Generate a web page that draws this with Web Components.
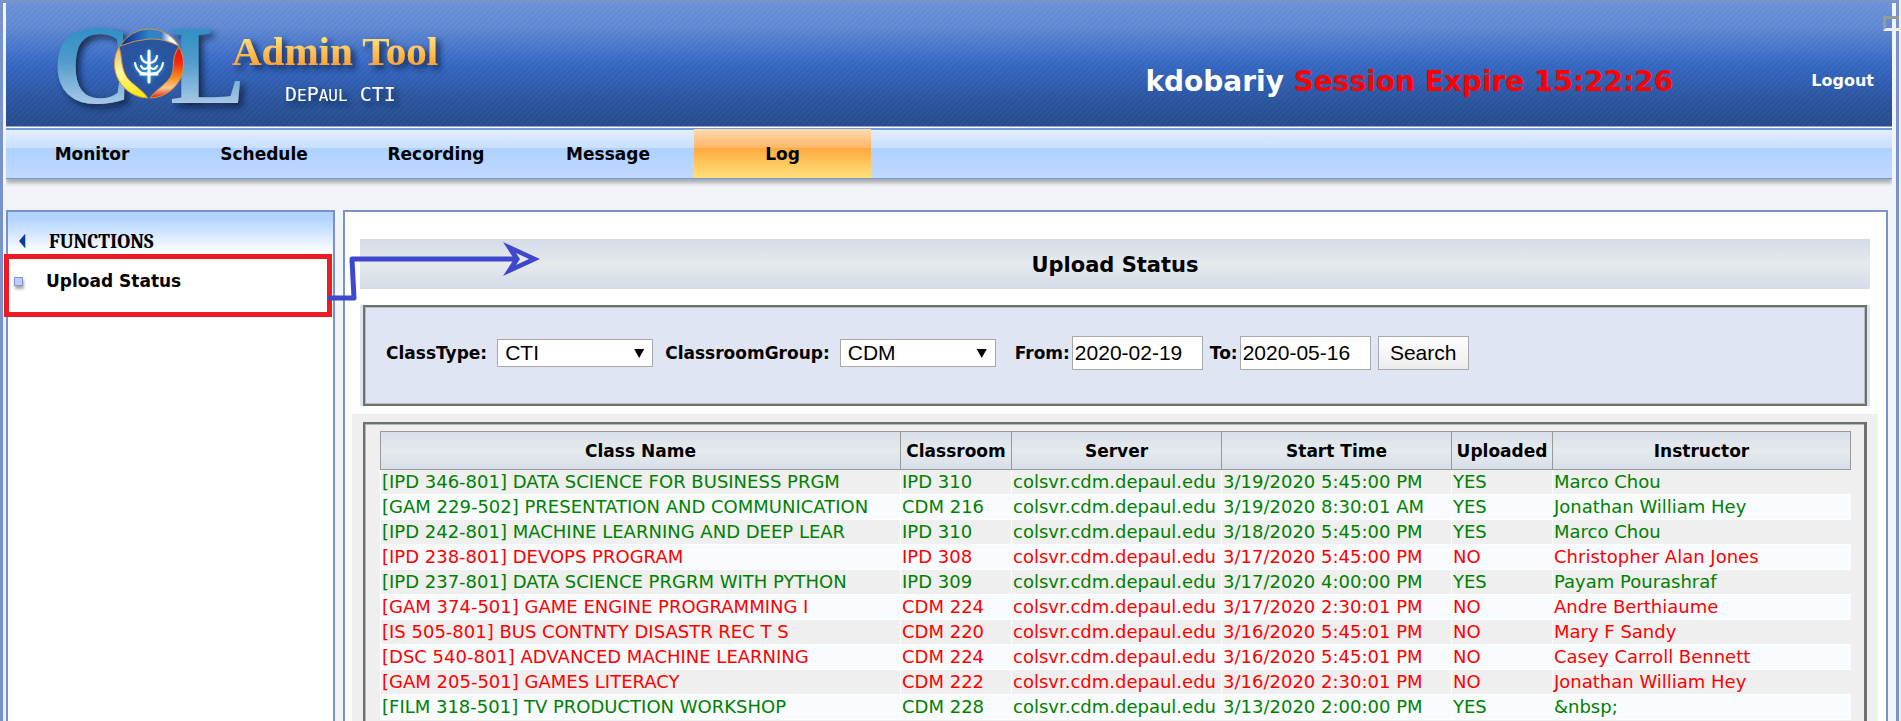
<!DOCTYPE html>
<html lang="en">
<head>
<meta charset="utf-8">
<title>COL Admin Tool - Upload Status</title>
<style>
  body { margin: 0; background: #f0f0f0; font-family: Verdana, "DejaVu Sans", sans-serif; font-size: 17px; color: #000; }
</style>
</head>
<body>
<col-app>
  <col-header slot="header" user="kdobariy" expires="15:22:26"></col-header>
  <col-nav slot="nav" current="Log"></col-nav>
  <col-sidebar slot="sidebar">Upload Status</col-sidebar>
  <col-title>Upload Status</col-title>
  <col-filter></col-filter>
  <col-log-table></col-log-table>
</col-app>

<script>
class BaseElement extends HTMLElement {
  connectedCallback() {
    if (this.shadowRoot) return;
    this.attachShadow({ mode: 'open' }).innerHTML = this.render();
  }
}

customElements.define('col-app', class extends BaseElement {
  render() {
    return `
    <style>
      :host { display: flex; flex-direction: column; box-sizing: border-box; min-height: 100vh; position: relative;
        margin-right: 2px; border: solid #7893cb; border-width: 3px 3px 0; background: #f3f4fa; }
      .top { padding: 0 4px 0 3px; flex: none; }
      .work { position: relative; display: flex; flex: 1 0 auto; margin-top: 31px; padding: 0 8px 0 3px; gap: 8px; }
      .side { flex: none; width: 329px; display: flex; }
      main { flex: 1; min-width: 0; display: flex; flex-direction: column; border: 2px solid #7893cb; border-bottom: 0; background: #fff; padding: 27px 8px 0 7px; }
      .callout { position: absolute; left: 0; top: 40px; overflow: visible; pointer-events: none; }
      .frame { position: absolute; right: -3px; top: 13px; width: 13px; height: 9px; border: 3px solid #999; border-bottom-color: #eee; border-right: 0; }
    </style>
    <div class="top"><slot name="header"></slot><slot name="nav"></slot></div>
    <div class="work">
      <div class="side"><slot name="sidebar"></slot></div>
      <main><slot></slot></main>
      <svg class="callout" width="540" height="70" viewBox="0 0 540 70" aria-hidden="true">
        <path fill="#ed1c24" fill-rule="evenodd" d="M1 4H329V67H1ZM6 9V62H324V9Z"/>
        <path fill="none" stroke="#3f48cc" stroke-width="5" stroke-linecap="round" stroke-linejoin="round" d="M327 48H351L349 9H514"/>
        <path fill="#3f48cc" d="M500 -8L537 9L500 26L511 9Z"/>
        <path fill="#e5e9ee" d="M513 3L517 9L513 15L526 9Z"/>
      </svg>
    </div>
    <div class="frame"></div>`;
  }
});

customElements.define('col-logo', class extends BaseElement {
  render() {
    return `
    <style>
      :host { display: block; }
      svg { display: block; overflow: visible; }
      .big { font: bold 112px "Liberation Serif", serif; }
      .tool { font: bold 41px "Liberation Serif", serif; }
      .org { font: 20px "DejaVu Sans Mono", monospace; }
      .sm { font-size: 16px; }
    </style>
    <svg width="460" height="123" viewBox="6 3 460 123" role="img" aria-label="COL Admin Tool, DePaul CTI">
      <defs>
        <linearGradient id="steel" gradientUnits="userSpaceOnUse" x1="0" y1="25" x2="0" y2="104">
          <stop offset="0" stop-color="#2c8fc4"/><stop offset=".45" stop-color="#4f9bcb"/><stop offset="1" stop-color="#a9c8e6"/></linearGradient>
        <linearGradient id="gold" gradientUnits="userSpaceOnUse" x1="0" y1="38" x2="0" y2="66">
          <stop offset="0" stop-color="#ffdf7a"/><stop offset="1" stop-color="#ff9f2e"/></linearGradient>
        <linearGradient id="blue" x1="0" x2="1"><stop offset="0" stop-color="#10208c"/><stop offset=".5" stop-color="#2a86cc"/><stop offset=".7" stop-color="#3a7cc8"/><stop offset=".85" stop-color="#fff"/></linearGradient>
        <linearGradient id="yellow" x1="0" y1="0" x2="0" y2="1"><stop offset="0" stop-color="#e0b878"/><stop offset=".5" stop-color="#fff6a0"/><stop offset="1" stop-color="#ffe800"/></linearGradient>
        <linearGradient id="red" x1="0" y1="0" x2="0" y2="1"><stop offset="0" stop-color="#e80c0c"/><stop offset=".3" stop-color="#f02a10"/><stop offset=".6" stop-color="#ff8a1c"/><stop offset=".8" stop-color="#ffc890"/><stop offset="1" stop-color="#e02010"/></linearGradient>
        <filter id="shadow" x="-20%" y="-20%" width="150%" height="150%"><feDropShadow dx="4" dy="4" stdDeviation="3" flood-color="#0c1c40" flood-opacity=".85"/></filter>
        <filter id="glow" x="-50%" y="-50%" width="200%" height="200%"><feDropShadow dx="0" dy="0" stdDeviation="2" flood-color="#22b4ff"/></filter>
      </defs>
      <g filter="url(#shadow)" fill="url(#steel)">
        <text class="big" x="52" y="103">C</text>
        <text class="big" x="170" y="103">L</text>
      </g>
      <circle cx="149" cy="64" r="34" fill="#2a549f"/>
      <g stroke="#c79a3c" stroke-width="1">
        <path fill="url(#blue)" d="M120 46A34 34 0 0 1 179 46Q163 38 149 39T120 46Z"/>
        <path fill="url(#yellow)" d="M119 47A34 34 0 0 0 148 98C140 87 129 83 125 74C121 65 122 56 119 47Z"/>
        <path fill="url(#red)" d="M179 47A34 34 0 0 1 150 98C157 88 168 84 172 74C175 65 171 58 179 47Z"/>
      </g>
      <g filter="url(#glow)" fill="none" stroke="#fff" stroke-width="3" stroke-linecap="round">
        <path d="M149 51V82M141 74H157"/>
        <path stroke-width="2" d="M135 63C137 75 146 74 149 74C152 74 161 75 163 63M141 56C142 63 147 63 149 63C151 63 156 63 157 56M141 66C143 70 146 70 149 66C152 70 155 70 157 66"/>
      </g>
      <g filter="url(#shadow)">
        <text class="tool" x="232" y="65" fill="url(#gold)">Admin Tool</text>
        <text class="org" x="285" y="101" fill="#fff">D<tspan class="sm">E</tspan>P<tspan class="sm">AUL</tspan> CTI</text>
      </g>
    </svg>`;
  }
});

customElements.define('col-header', class extends BaseElement {
  render() {
    return `
    <style>
      :host { display: flex; align-items: center; height: 123px; border-bottom: 1px solid #8fa6d4; box-shadow: 0 1px #fff; color: #fff; font-weight: bold;
        background: repeating-linear-gradient(135deg, rgba(255,255,255,.02) 0 2px, rgba(0,0,0,.02) 2px 4px),
          linear-gradient(#6b93d9 0, #608ad3 20%, #3a6cc8 46%, #3465bf 54%, #2b559e 80%, #284c8e 100%); }
      .status { margin: 34px 0 0 auto; font-size: 28px; line-height: 34px; white-space: nowrap; }
      .expire { color: #f00; }
      a { margin: 33px 18px 0 138px; font-size: 16px; line-height: 34px; color: #fff; text-decoration: none; }
    </style>
    <col-logo></col-logo>
    <div class="status">${this.getAttribute('user')} <span class="expire">Session Expire ${this.getAttribute('expires')}</span></div>
    <a href="#logout">Logout</a>`;
  }
});

customElements.define('col-nav', class extends BaseElement {
  render() {
    const current = this.getAttribute('current');
    const links = ['Monitor', 'Schedule', 'Recording', 'Message', 'Log'].map(t =>
      `<a href="#${t.toLowerCase()}"${t === current ? ' class="on" aria-current="page"' : ''}>${t}</a>`).join('');
    return `
    <style>
      :host { display: block; margin-top: 1px; }
      nav { display: flex; border: solid #6f9bda; border-width: 2px 0 1px; height: 48px; box-shadow: 0 4px 4px #aaa;
        background: linear-gradient(#e2eeff 0, #c8dfff 37%, #aed1ff 38%, #c0daff 100%); clip-path: inset(0 0 -8px 0); }
      a { width: 172px; text-align: center; font-weight: bold; line-height: 48px; color: #000; text-decoration: none; }
      .on { width: 177px; background: linear-gradient(#ffd8ac 0, #ffb668 37%, #ffaa3e 38%, #ffe07c 100%); box-shadow: 0 -1px #ffd8ac; }
    </style>
    <nav>${links}</nav>`;
  }
});

customElements.define('col-sidebar', class extends BaseElement {
  render() {
    return `
    <style>
      :host { flex: 1; display: block; border: 2px solid #7893cb; border-bottom: 0; background: #fff; }
      h2 { display: flex; align-items: center; margin: 0; height: 43px; padding: 15px 0 0 11px; box-sizing: border-box; gap: 23px;
        font: bold 20px Cambria, "Liberation Serif", serif; background: linear-gradient(#b3d4ff 0, #b3d4ff 15%, #fff 95%); }
      a { display: flex; align-items: center; height: 52px; padding-left: 6px; gap: 22px; font-weight: bold; color: #000; text-decoration: none; }
      i { width: 7px; height: 7px; margin-right: 1px; border: 1px solid #8094d8; background: #c6cbf4; box-shadow: 1px 3px 3px #aaa; }
    </style>
    <h2><svg width="7" height="14" viewBox="0 0 7 14" aria-hidden="true"><path fill="#0a3a9c" d="M0 7L6 0V14Z"/><path fill="#bbb" d="M6 0H7V14H6Z"/></svg>FUNCTIONS</h2>
    <a href="#upload-status"><i></i><slot></slot></a>`;
  }
});

customElements.define('col-title', class extends BaseElement {
  render() {
    return `
    <style>
      :host { display: block; margin: 0 8px 16px; background: linear-gradient(#d5dbe8, #e5eaec 50%, #d5dbe8); }
      h1 { margin: 0; padding-top: 2px; font-size: 21px; line-height: 48px; text-align: center; }
    </style>
    <h1><slot></slot></h1>`;
  }
});

customElements.define('col-filter', class extends BaseElement {
  render() {
    return `
    <style>
      :host { display: block; margin: 0 8px 8px; padding: 0 3px; background: #dfe5f3; }
      form { display: flex; align-items: center; box-sizing: border-box; height: 101px; padding: 0 21px 4px;
        border: solid #6c706e; outline: 1px solid #b4bab8; outline-offset: -3px; border-width: 2px 3px 3px 2px; }
      label { font-weight: bold; white-space: nowrap; }
      select, input, button { box-sizing: border-box; margin: 0; border: 1px solid #a9a9a9; background: #fff; color: #000;
        font: 21px Arial, "Liberation Sans", sans-serif; }
      .pick { position: relative; margin: 0 12px 0 10px; }
      .pick::after { content: ""; position: absolute; right: 9px; top: 10px; width: 10px; height: 9px; background: #000; clip-path: polygon(0 0, 100% 0, 50% 100%); pointer-events: none; }
      select { display: block; width: 156px; height: 28px; padding: 0 0 0 7px; line-height: 24px; border-radius: 0; appearance: none; }
      input { width: 131px; height: 34px; padding: 0 2px; margin: 0 7px 0 2px; }
      button { width: 91px; height: 34px; padding: 0; background: linear-gradient(#fff, #ececec); }
      .dates { margin-left: 7px; }
    </style>
    <form>
      <label for="type">ClassType:</label>
      <span class="pick"><select id="type"><option>CTI</option></select></span>
      <label for="group">ClassroomGroup:</label>
      <span class="pick"><select id="group"><option>CDM</option></select></span>
      <label class="dates" for="from">From:</label><input id="from" value="2020-02-19">
      <label for="to">To:</label><input id="to" value="2020-05-16">
      <button type="button">Search</button>
    </form>`;
  }
});

customElements.define('col-log-table', class extends BaseElement {
  render() {
    const head = ['Class Name', 'Classroom', 'Server', 'Start Time', 'Uploaded', 'Instructor'];
    const server = 'colsvr.cdm.depaul.edu';
    const rows = [
      ['[IPD 346-801] DATA SCIENCE FOR BUSINESS PRGM', 'IPD 310', '3/19/2020 5:45:00 PM', 'YES', 'Marco Chou'],
      ['[GAM 229-502] PRESENTATION AND COMMUNICATION', 'CDM 216', '3/19/2020 8:30:01 AM', 'YES', 'Jonathan William Hey'],
      ['[IPD 242-801] MACHINE LEARNING AND DEEP LEAR', 'IPD 310', '3/18/2020 5:45:00 PM', 'YES', 'Marco Chou'],
      ['[IPD 238-801] DEVOPS PROGRAM', 'IPD 308', '3/17/2020 5:45:00 PM', 'NO', 'Christopher Alan Jones'],
      ['[IPD 237-801] DATA SCIENCE PRGRM WITH PYTHON', 'IPD 309', '3/17/2020 4:00:00 PM', 'YES', 'Payam Pourashraf'],
      ['[GAM 374-501] GAME ENGINE PROGRAMMING I', 'CDM 224', '3/17/2020 2:30:01 PM', 'NO', 'Andre Berthiaume'],
      ['[IS 505-801] BUS CONTNTY DISASTR REC T S', 'CDM 220', '3/16/2020 5:45:01 PM', 'NO', 'Mary F Sandy'],
      ['[DSC 540-801] ADVANCED MACHINE LEARNING', 'CDM 224', '3/16/2020 5:45:01 PM', 'NO', 'Casey Carroll Bennett'],
      ['[GAM 205-501] GAMES LITERACY', 'CDM 222', '3/16/2020 2:30:01 PM', 'NO', 'Jonathan William Hey'],
      ['[FILM 318-501] TV PRODUCTION WORKSHOP', 'CDM 228', '3/13/2020 2:00:00 PM', 'YES', '&amp;nbsp;'],
    ];
    return `
    <style>
      :host { flex: 1 0 auto; display: flex; padding: 8px 11px 0; background: #efefef; }
      .box { flex: 1; min-width: 0; border: solid #6c706e; border-width: 2px 3px 0 2px; box-shadow: inset 1px 1px #b4bab8; padding: 7px 13px 0 15px; }
      table { width: 100%; table-layout: fixed; border-collapse: separate; border-spacing: 0; }
      .room { width: 111px; } .server { width: 210px; } .time { width: 230px; } .up { width: 101px; } .who { width: 299px; }
      th { height: 37px; padding: 0; border: solid #999; border-width: 1px 0 1px 1px; background: linear-gradient(#d8dfe9, #e5eaec 50%, #d8dfe9); }
      th:last-child { border-right-width: 1px; }
      td { height: 24px; padding: 0 0 0 1px; border: solid #fff; border-width: 0 0 1px 1px; font-size: 18px; line-height: 24px; white-space: nowrap; }
      tr { background: #efefef; } tbody tr:nth-child(even) { background: #f8fbff; }
      .YES { color: green; } .NO { color: red; }
    </style>
    <div class="box"><table>
      <colgroup><col><col class="room"><col class="server"><col class="time"><col class="up"><col class="who"></colgroup>
      <thead><tr>${head.map(h => `<th scope="col">${h}</th>`).join('')}</tr></thead>
      <tbody>${rows.map(([name, room, time, up, who]) =>
        `<tr class="${up}">${[name, room, server, time, up, who].map(c => `<td>${c}</td>`).join('')}</tr>`).join('')}</tbody>
    </table></div>`;
  }
});
</script>
</body>
</html>
